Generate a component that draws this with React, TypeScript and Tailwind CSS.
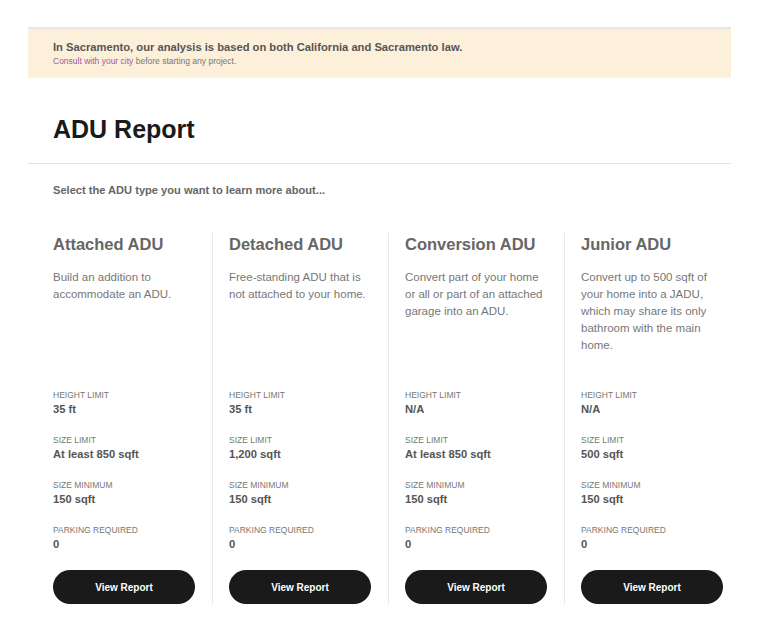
import React from "react";

type AduType = {
  name: string;
  description: string;
  height: string;
  sizeLimit: string;
  sizeMin: string;
  parking: string;
};

const aduTypes: AduType[] = [
  {
    name: "Attached ADU",
    description: "Build an addition to accommodate an ADU.",
    height: "35 ft",
    sizeLimit: "At least 850 sqft",
    sizeMin: "150 sqft",
    parking: "0",
  },
  {
    name: "Detached ADU",
    description: "Free-standing ADU that is not attached to your home.",
    height: "35 ft",
    sizeLimit: "1,200 sqft",
    sizeMin: "150 sqft",
    parking: "0",
  },
  {
    name: "Conversion ADU",
    description:
      "Convert part of your home or all or part of an attached garage into an ADU.",
    height: "N/A",
    sizeLimit: "At least 850 sqft",
    sizeMin: "150 sqft",
    parking: "0",
  },
  {
    name: "Junior ADU",
    description:
      "Convert up to 500 sqft of your home into a JADU, which may share its only bathroom with the main home.",
    height: "N/A",
    sizeLimit: "500 sqft",
    sizeMin: "150 sqft",
    parking: "0",
  },
];

function Stat({ label, value }: { label: string; value: string }) {
  return (
    <div className="h-[45px]">
      <div className="text-[8.5px] leading-[11px] uppercase text-[#777]">{label}</div>
      <div className="text-[11.2px] leading-[16px] font-bold text-[#555]">{value}</div>
    </div>
  );
}

function AduColumn({ adu, first }: { adu: AduType; first: boolean }) {
  return (
    <div
      className={`flex flex-col shrink-0 ${
        first ? "w-[159px] pr-[17px]" : "w-[176px] pl-[16px] pr-[17px] border-l border-[#e8e8e8]"
      }`}
    >
      <h3 className="text-[16.5px] leading-[22px] font-bold text-[#666]">{adu.name}</h3>
      <p className="mt-[14px] h-[121px] text-[11.5px] leading-[17px] text-[#777]">
        {adu.description}
      </p>
      <Stat label="Height Limit" value={adu.height} />
      <Stat label="Size Limit" value={adu.sizeLimit} />
      <Stat label="Size Minimum" value={adu.sizeMin} />
      <Stat label="Parking Required" value={adu.parking} />
      <button
        type="button"
        className="h-[34px] w-[142px] rounded-full bg-[#1a1a1a] text-white text-[10px] font-bold"
      >
        View Report
      </button>
    </div>
  );
}

export default function App() {
  return (
    <div
      className="min-h-[631px] bg-white pt-[27px]"
      style={{ fontFamily: '"Liberation Sans", Arial, sans-serif' }}
    >
      <div className="ml-[28px] w-[703px]">
        {/* Jurisdiction notice */}
        <div className="h-[51px] border-t-2 border-[#e6e6e6] bg-[#fcf0da] px-[25px] pt-[10px]">
          <p className="text-[11.2px] leading-[16px] font-bold text-[#555]">
            In Sacramento, our analysis is based on both California and Sacramento law.
          </p>
          <p className="text-[8.5px] leading-[12px] text-[#777]">
            <span className="text-[#a8589a]">Consult with your city</span> before starting any
            project.
          </p>
        </div>

        <h1 className="px-[25px] pt-[36px] pb-[19px] text-[25px] leading-[30px] font-bold text-[#1a1a1a]">
          ADU Report
        </h1>
        <div className="border-t border-[#e3e3e3]" />

        <div className="px-[25px] pt-[19px]">
          <p className="text-[11.1px] leading-[14px] font-bold text-[#666]">
            Select the ADU type you want to learn more about...
          </p>
          <div className="mt-[36px] flex">
            {aduTypes.map((adu, i) => (
              <AduColumn key={adu.name} adu={adu} first={i === 0} />
            ))}
          </div>
        </div>
      </div>
    </div>
  );
}
